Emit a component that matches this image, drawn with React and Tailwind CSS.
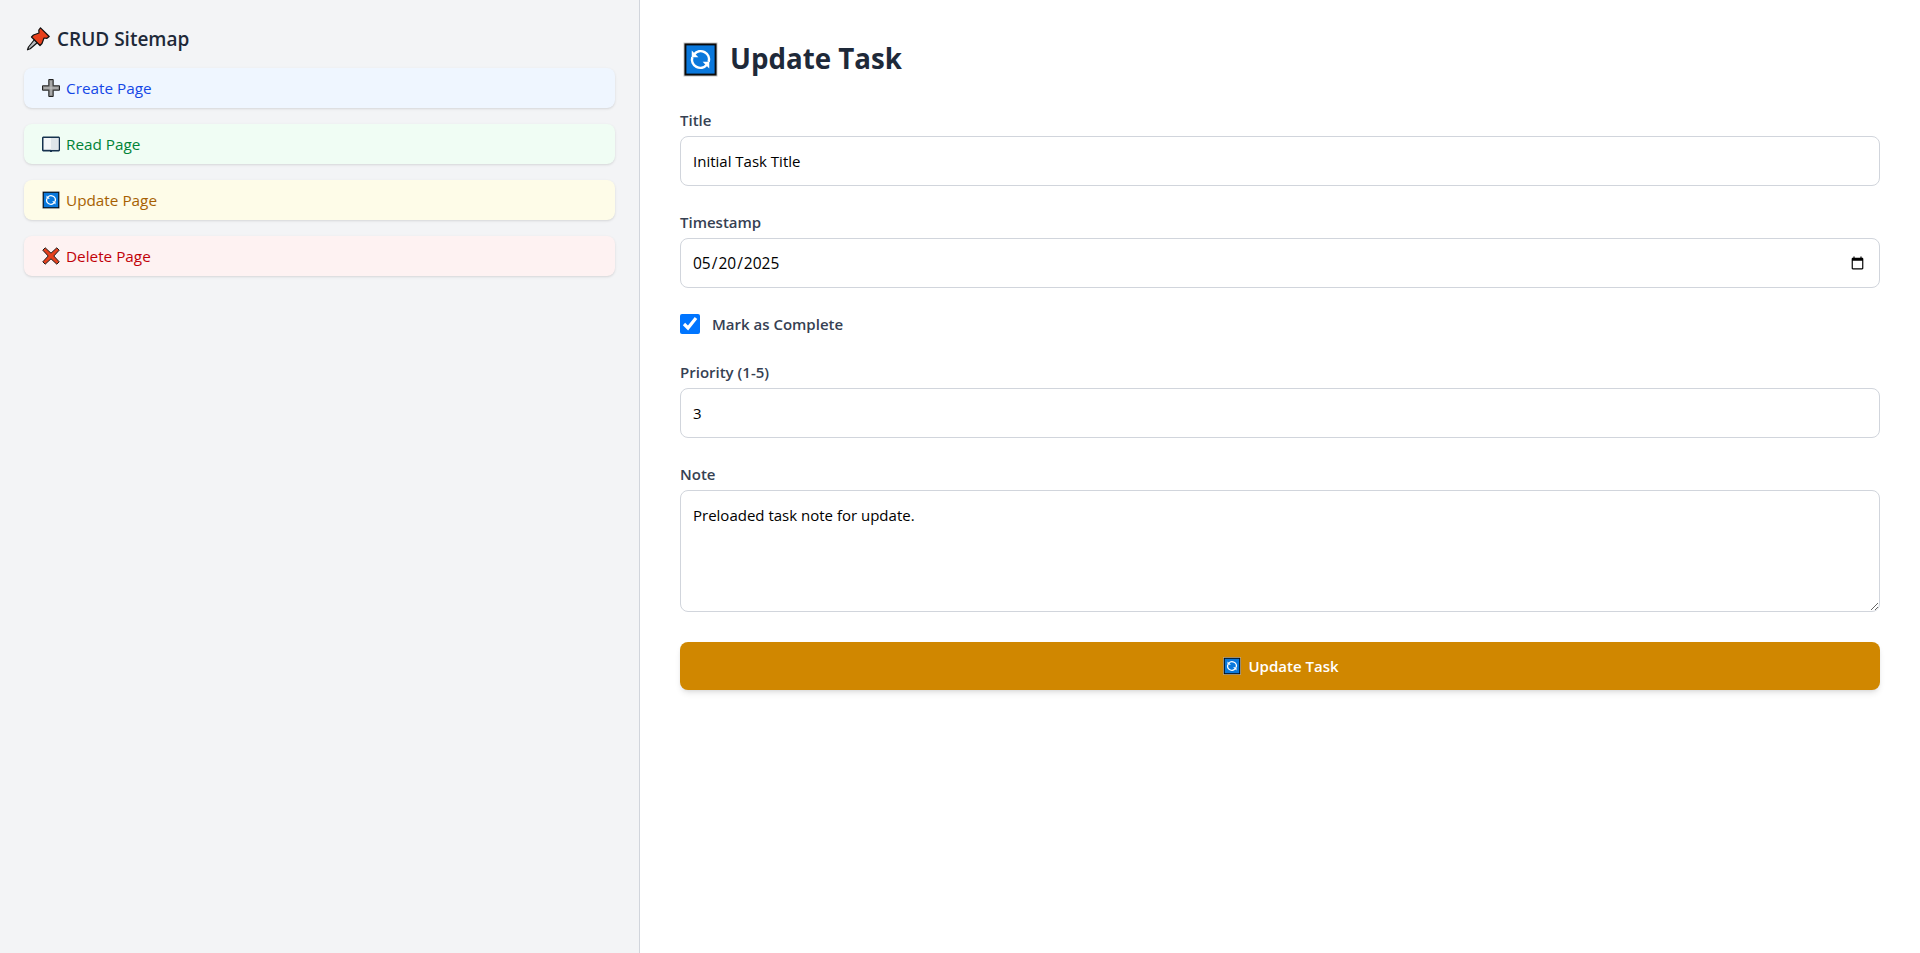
function Pin({ className }) {
  return (
    <svg viewBox="0 0 24 24" className={className}>
      <path d="M1.5 22.8 L2.5 20 L8.5 12.5 L11.5 15.5 L4.2 21.8 Z" fill="#b8bcc0" stroke="#111" strokeWidth="1.2" strokeLinejoin="round" />
      <path d="M14.5 .8 L23.2 9.5 L21 11.3 L18 11 L16 16.5 L14 18.5 L5.5 10 L7.5 8 L13 6 L12.8 3 Z" fill="#e8401c" stroke="#111" strokeWidth="1.2" strokeLinejoin="round" />
    </svg>
  );
}

function Plus({ className }) {
  return (
    <svg viewBox="0 0 18 18" className={className}>
      <path d="M6.8 .5 H11.2 V6.8 H17.5 V11.2 H11.2 V17.5 H6.8 V11.2 H.5 V6.8 H6.8 Z" fill="#8c8c8c" stroke="#222" strokeWidth="1" strokeLinejoin="round" />
      <path d="M9 2 V16 M2 9 H16" stroke="#c4c4c4" strokeWidth="1" />
    </svg>
  );
}

function Book({ className }) {
  return (
    <svg viewBox="0 0 18 16" className={className}>
      <rect x=".5" y="1" width="17" height="14" fill="#16324f" stroke="#16324f" rx=".5" />
      <path d="M1.5 2 H16.5 V13.8 H1.5 Z" fill="#f4f6f8" />
      <path d="M9 2 H16.5 V13.8 H9 Z" fill="#dfe5ea" />
      <path d="M8 15 H10 V16 H8 Z" fill="#16324f" />
    </svg>
  );
}

function Refresh({ className }) {
  return (
    <svg viewBox="0 0 36 36" className={className}>
      <rect x=".5" y=".5" width="35" height="35" fill="#c9c9c9" />
      <rect x="1.5" y="1.5" width="33" height="33" fill="#0a0a0a" />
      <rect x="3.5" y="3.5" width="29" height="29" fill="#0a78dc" />
      <path d="M26.4 20.5 A8.6 8.6 0 0 0 11.5 12.6" fill="none" stroke="#fff" strokeWidth="2.6" />
      <path d="M9.6 15.5 A8.6 8.6 0 0 0 24.5 23.4" fill="none" stroke="#fff" strokeWidth="2.6" />
      <path d="M9 8.8 V15.6 H15.8 Z" fill="#fff" />
      <path d="M27 27.2 V20.4 H20.2 Z" fill="#fff" />
    </svg>
  );
}

function Cross({ className }) {
  return (
    <svg viewBox="0 0 18 18" className={className}>
      <path d="M3.2 .8 L9 6.2 L14.8 .8 L17.2 3.2 L11.8 9 L17.2 14.8 L14.8 17.2 L9 11.8 L3.2 17.2 L.8 14.8 L6.2 9 L.8 3.2 Z" fill="#e5401c" stroke="#1c1c1c" strokeWidth="1" strokeLinejoin="round" />
    </svg>
  );
}

const links = [
  { label: "Create Page", Icon: Plus, cls: "bg-blue-50 text-blue-700" },
  { label: "Read Page", Icon: Book, cls: "bg-green-50 text-green-700" },
  { label: "Update Page", Icon: Refresh, cls: "bg-yellow-50 text-yellow-700" },
  { label: "Delete Page", Icon: Cross, cls: "bg-red-50 text-red-700" },
];

const inputCls =
  "block w-full h-[50px] rounded-lg border border-gray-300 bg-white px-3 text-black";
const labelCls = "mb-1 block h-6 text-[15px] leading-6 font-semibold text-gray-700";

export default function App() {
  return (
    <div className="flex min-h-[953px] bg-white font-['Open_Sans','Noto_Sans',sans-serif]">
      <aside className="w-[640px] shrink-0 border-r border-gray-300 bg-gray-100 px-6 pt-6">
        <h2 className="mb-4 flex h-7 items-center gap-[7px] pl-[2px] pt-[2px] text-[19px] font-semibold text-gray-800">
          <Pin className="h-6 w-6" />
          CRUD Sitemap
        </h2>
        <nav className="flex flex-col gap-4">
          {links.map(({ label, Icon, cls }) => (
            <a key={label} className={`flex h-10 items-center gap-[6px] rounded-lg px-[18px] text-[15.3px] shadow ${cls}`}>
              <Icon className="h-[18px] w-[18px]" />
              {label}
            </a>
          ))}
        </nav>
      </aside>
      <main className="flex-1 px-10 pt-10">
        <h1 className="mb-8 flex h-9 items-center gap-3 pl-[3px] pt-[2px] text-[27.7px] font-bold text-gray-800">
          <Refresh className="h-[35px] w-[35px]" />
          Update Task
        </h1>
        <form className="flex flex-col gap-6">
          <div>
            <label className={labelCls}>Title</label>
            <input className={`${inputCls} text-[15px]`} defaultValue="Initial Task Title" />
          </div>
          <div>
            <label className={labelCls}>Timestamp</label>
            <input type="date" className={`${inputCls} pt-[2px] pl-[11px] text-[15.5px]`} defaultValue="2025-05-20" />
          </div>
          <label className="flex h-6 items-center gap-3 text-[15px] font-semibold text-gray-700">
            <input type="checkbox" defaultChecked className="h-5 w-5" />
            Mark as Complete
          </label>
          <div>
            <label className={labelCls}>Priority (1-5)</label>
            <input type="number" className={`${inputCls} text-[15px]`} defaultValue="3" />
          </div>
          <div>
            <label className={labelCls}>Note</label>
            <textarea className="block h-[122px] w-full rounded-lg border border-gray-300 bg-white px-3 py-3 text-[15px] leading-6 text-black" defaultValue="Preloaded task note for update." />
          </div>
          <button type="button" className="mt-[6px] flex h-12 w-full items-center justify-center gap-[7px] rounded-lg bg-yellow-600 pl-[2px] text-[15px] font-semibold text-white shadow-md">
            <Refresh className="h-[18px] w-[18px]" />
            Update Task
          </button>
        </form>
      </main>
    </div>
  );
}
